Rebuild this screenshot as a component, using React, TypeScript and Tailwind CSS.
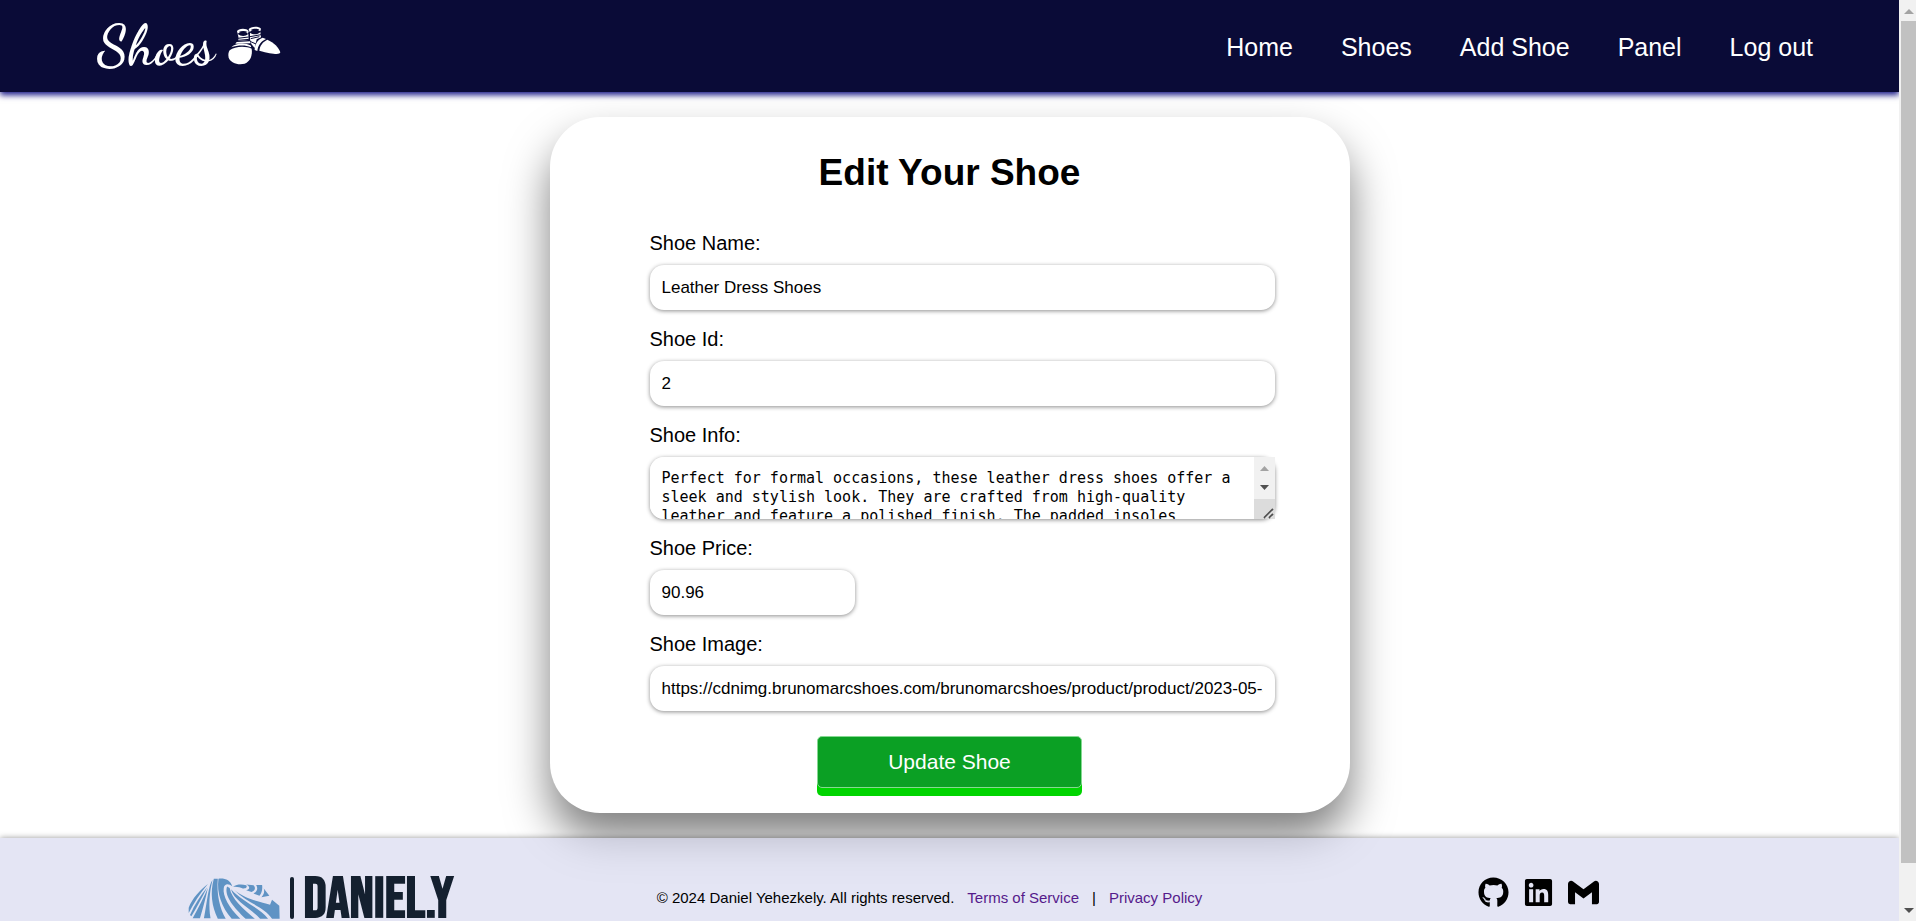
import type { ReactNode } from "react";
import { FaGithub, FaLinkedin } from "react-icons/fa";
import { SiGmail } from "react-icons/si";

const NAV = ["Home", "Shoes", "Add Shoe", "Panel", "Log out"];

const INPUT =
  "block h-[45px] rounded-[14px] bg-white px-3 text-[17px] text-black outline-none shadow-[0_1px_4px_rgba(0,0,0,0.45)]";

const INFO =
  "Perfect for formal occasions, these leather dress shoes offer a sleek and stylish look. They are crafted from high-quality leather and feature a polished finish. The padded insoles provide all-day comfort.";

function ShoesIcon() {
  return (
    <svg viewBox="15 20 162 120" className="h-10 w-[54px]" fill="#fff" aria-hidden="true">
      <path d="M45 36C47 27 74 25 80 35L78 43C70 35 56 35 47 43Z" />
      <path d="M50 38C58 34 70 34 77 38C70 42 58 42 50 38Z" fill="#0a0b37" />
      <path d="M47 44C57 52 70 52 79 44L80 62L48 65C50 58 50 52 47 44Z" />
      <path d="M80 30C84 21 110 19 117 28L115 36C106 29 92 30 83 38Z" />
      <path d="M86 32C94 27 106 27 112 31C106 35 94 37 86 32Z" fill="#0a0b37" />
      <path d="M84 40C94 48 108 46 115 38L117 54L104 60L98 86L88 74L84 60Z" />
      <path d="M47 57L80 53M48 63L82 60M84 52L117 46M86 58L112 52M84 66L102 74" stroke="#0a0b37" strokeWidth="3" fill="none" />
      <path d="M44 68L84 66L86 72L40 73Z" />
      <path d="M28 84C42 70 70 70 87 79L87 84C70 76 46 78 28 84Z" />
      <path d="M23 93C38 80 72 79 89 88C92 108 85 126 68 133C46 138 26 130 20 115C18 106 19 99 23 93Z" />
      <path d="M98 92C98 74 108 60 122 55L132 59C117 66 108 78 106 95Z" />
      <path d="M112 94C114 78 122 68 136 61C156 70 170 84 175 99C173 108 150 104 112 94Z" />
    </svg>
  );
}

function StripedHill() {
  return (
    <svg viewBox="15 20 276 124" className="h-[41px] w-[92px] shrink-0" fill="#5f93c4" aria-hidden="true">
      <path d="M74 38C52 54 26 82 16 110L16 126C30 98 50 66 74 38Z" />
      <path d="M72 48C52 72 34 100 20 132L24 136C42 106 58 76 72 48Z" />
      <path d="M74 50C62 78 46 108 28 142L50 142C60 108 68 78 74 50Z" />
      <path d="M88 26C76 40 72 90 62 142L82 142C76 105 78 66 88 26Z" />
      <path d="M92 22C80 64 86 106 104 143L128 143C110 112 100 70 104 22Z" />
      <path d="M106 22C100 66 116 108 146 143L172 143C138 110 118 74 122 50C124 36 138 36 148 46C142 26 126 20 106 22Z" />
      <path d="M132 46C122 74 154 112 188 143L216 143C180 112 146 84 140 50Z" />
      <path d="M144 54C152 88 204 112 232 143L256 143C228 108 178 92 144 54Z" />
      <path d="M154 56C190 86 236 92 262 101L268 86L290 104L291 143L268 143C248 110 194 96 154 56Z" />
      <path d="M150 46C162 38 178 38 190 42C196 50 184 54 176 50C166 46 158 48 150 46Z" />
      <path d="M190 40L212 42C220 50 216 60 206 62L190 57C202 54 202 46 190 40Z" />
      <path d="M220 41L238 41C240 56 236 66 230 74L212 67C224 60 226 52 220 41Z" />
      <path d="M243 52L260 74L236 78C244 70 246 62 243 52Z" />
    </svg>
  );
}

function Field({ id, label, children }: { id: string; label: string; children: ReactNode }) {
  return (
    <div>
      <label htmlFor={id} className="mb-2.5 block w-fit text-xl leading-6">
        {label}
      </label>
      {children}
    </div>
  );
}

export default function App() {
  return (
    <div className="flex h-screen bg-white font-['Liberation_Sans',Arial,sans-serif] text-black">
      <div className="min-w-0 flex-1 overflow-hidden">
        <header className="relative flex h-[92px] items-center justify-between bg-[#0a0b37] pr-[86px] pl-[97px] text-white shadow-[0_3px_6px_#00007ae6]">
          <a href="#" className="flex items-center gap-3">
            <span className="font-['Dancing_Script','Liberation_Serif',cursive] text-[56px] leading-none font-semibold">
              Shoes
            </span>
            <ShoesIcon />
          </a>
          <nav className="flex gap-12 pt-0.5 text-[25px] leading-8">
            {NAV.map((item) => (
              <a key={item} href="#">
                {item}
              </a>
            ))}
          </nav>
        </header>

        <main className="pt-[25px] pb-[25px]">
          <form
            className="mx-auto w-[800px] rounded-[50px] bg-white pt-[34px] pr-[75px] pb-[25px] pl-[100px] shadow-[0_25px_44px_rgba(0,0,0,0.5)]"
            onSubmit={(e) => e.preventDefault()}
          >
            <h1 className="-ml-[25px] text-center text-[37px] leading-[44px] font-bold">Edit Your Shoe</h1>
            <div className="mt-9 flex flex-col gap-[17px]">
              <Field id="name" label="Shoe Name:">
                <input id="name" className={`${INPUT} w-full`} defaultValue="Leather Dress Shoes" />
              </Field>
              <Field id="shoe-id" label="Shoe Id:">
                <input id="shoe-id" className={`${INPUT} w-full`} defaultValue="2" />
              </Field>
              <Field id="info" label="Shoe Info:">
                <div className="relative">
                  <textarea
                    id="info"
                    className="block h-[62px] w-full resize-none rounded-[14px] bg-white py-3 pr-[33px] pl-3 font-['Consolas','DejaVu_Sans_Mono',monospace] text-[15px] leading-[19px] shadow-[0_1px_4px_rgba(0,0,0,0.45)] outline-none [scrollbar-width:none]"
                    defaultValue={INFO}
                  />
                  <svg viewBox="0 0 21 62" className="absolute top-0 right-0 h-[62px] w-[21px]" aria-hidden="true">
                    <path d="M0 0H21V42H0Z" fill="#f1f1f1" />
                    <path d="M0 42H21V62H0Z" fill="#dcdcdc" />
                    <path d="M6 14L10.5 9L15 14Z" fill="#a3a3a3" />
                    <path d="M6 28L10.5 33L15 28Z" fill="#505050" />
                    <path d="M10 61L19 52M15 61L19 57" stroke="#505050" strokeWidth="1.8" />
                    <path d="M11.5 61L19 53.5M16.5 61L19 58.5" stroke="#fff" strokeWidth="0.7" />
                  </svg>
                </div>
              </Field>
              <Field id="price" label="Shoe Price:">
                <input id="price" className={`${INPUT} w-[205px]`} defaultValue="90.96" />
              </Field>
              <Field id="image" label="Shoe Image:">
                <input
                  id="image"
                  className={`${INPUT} w-full`}
                  defaultValue="https://cdnimg.brunomarcshoes.com/brunomarcshoes/product/product/2023-05-30/shoe.jpg"
                />
              </Field>
            </div>
            <div className="mt-[25px] -ml-[25px] flex justify-center">
              <button
                type="submit"
                className="h-[52px] w-[265px] rounded-[5px] border border-[#85d991] bg-[#0ba024] text-[21px] text-white shadow-[0_8px_0_#00d400]"
              >
                Update Shoe
              </button>
            </div>
          </form>
        </main>

        <footer className="grid grid-cols-3 items-center justify-items-center bg-[rgba(213,215,238,0.65)] pt-[37px] pr-14 pb-9 pl-4 shadow-[0_0_6px_rgba(0,0,0,0.4)]">
          <a href="#" className="flex items-center gap-2.5">
            <StripedHill />
            <span className="h-[42px] w-1 rounded-sm bg-[#14202f]" />
            <span className="pt-1 font-['Bebas_Neue','Open_Sans_Condensed','Roboto_Condensed',sans-serif] text-[57px] leading-[42px] font-bold text-[#14202f]">
              DANIEL.Y
            </span>
          </a>
          <p className="flex items-center gap-[13px] text-[15px] leading-5 whitespace-nowrap">
            © 2024 Daniel Yehezkely. All rights reserved.
            <a href="#" className="text-[#551a8b]">
              Terms of Service
            </a>
            <span>|</span>
            <a href="#" className="text-[#551a8b]">
              Privacy Policy
            </a>
          </p>
          <div className="mb-3 flex items-center gap-3.5">
            <a href="#" aria-label="GitHub">
              <FaGithub className="size-[31px]" />
            </a>
            <a href="#" aria-label="LinkedIn">
              <FaLinkedin className="size-[31px]" />
            </a>
            <a href="#" aria-label="Gmail">
              <SiGmail className="size-[31px]" />
            </a>
          </div>
        </footer>
      </div>

      <div className="flex w-[17px] flex-col items-end justify-between bg-[#f1f1f1]" aria-hidden="true">
        <svg viewBox="0 0 17 21" className="h-[21px] w-[17px]">
          <path d="M5 14L10 9L15 14Z" fill="#a3a3a3" />
        </svg>
        <div className="w-[15px] grow-[842] bg-[#c1c1c1]" />
        <div className="grow-[37]" />
        <svg viewBox="0 0 17 21" className="h-[21px] w-[17px]">
          <path d="M5 8L10 13L15 8Z" fill="#505050" />
        </svg>
      </div>
    </div>
  );
}
